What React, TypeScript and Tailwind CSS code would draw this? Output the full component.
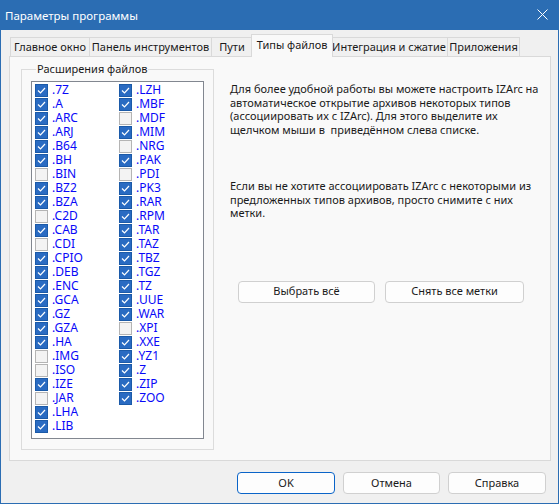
import React from 'react';

const col1: [string, boolean][] = [
  ['.7Z', true], ['.A', true], ['.ARC', true], ['.ARJ', true], ['.B64', true], ['.BH', true],
  ['.BIN', false], ['.BZ2', true], ['.BZA', true], ['.C2D', false], ['.CAB', true], ['.CDI', false],
  ['.CPIO', true], ['.DEB', true], ['.ENC', true], ['.GCA', true], ['.GZ', true], ['.GZA', true],
  ['.HA', true], ['.IMG', false], ['.ISO', false], ['.IZE', true], ['.JAR', false], ['.LHA', true],
  ['.LIB', true],
];

const col2: [string, boolean][] = [
  ['.LZH', true], ['.MBF', true], ['.MDF', false], ['.MIM', true], ['.NRG', false], ['.PAK', true],
  ['.PDI', false], ['.PK3', true], ['.RAR', true], ['.RPM', true], ['.TAR', true], ['.TAZ', true],
  ['.TBZ', true], ['.TGZ', true], ['.TZ', true], ['.UUE', true], ['.WAR', true], ['.XPI', false],
  ['.XXE', true], ['.YZ1', true], ['.Z', true], ['.ZIP', true], ['.ZOO', true],
];

const tabs = [
  { label: 'Главное окно', w: 'w-[80px]' },
  { label: 'Панель инструментов', w: 'w-[123px]' },
  { label: 'Пути', w: 'w-[42px]' },
  { label: 'Типы файлов', w: 'w-[82px]', active: true },
  { label: 'Интеграция и сжатие', w: 'w-[118px]' },
  { label: 'Приложения', w: 'w-[73px]' },
];

function Check({ checked }: { checked: boolean }) {
  if (!checked) {
    return <span className="w-[13px] h-[13px] shrink-0 border border-[#b4b4b4] bg-[#f3f3f3]" />;
  }
  return (
    <span className="w-[13px] h-[13px] shrink-0 border border-[#1b5aa8] bg-[#2a6bc2] flex items-center justify-center">
      <svg width="11" height="11" viewBox="0 0 11 11">
        <polyline points="2,5.5 4.5,8 9,3" fill="none" stroke="#ffffff" strokeWidth="1.2" />
      </svg>
    </span>
  );
}

function ExtColumn({ items }: { items: [string, boolean][] }) {
  return (
    <div className="flex flex-col w-[84px]">
      {items.map(([name, on]) => (
        <div key={name} className="h-[14px] flex items-center gap-[4px]">
          <Check checked={on} />
          <span className="text-[#0808f8] text-[12px] leading-[12px]">{name}</span>
        </div>
      ))}
    </div>
  );
}

function Btn({ children, w, primary }: { children: React.ReactNode; w: string; primary?: boolean }) {
  return (
    <button
      className={
        'h-[22px] rounded-[4px] bg-[#fdfdfd] text-[#1a1a1a] text-[11px] whitespace-nowrap ' +
        w +
        (primary ? ' border border-[#0a64c8]' : ' border border-[#d0d0d0]')
      }
    >
      {children}
    </button>
  );
}

export default function App() {
  return (
    <div
      className="w-[559px] h-[504px] border border-[#2b6db3] bg-[#f0f0f0] flex flex-col text-[11px] text-[#1a1a1a]"
      style={{ fontFamily: '"Noto Sans", "Liberation Sans", sans-serif' }}
    >
      {/* Title bar */}
      <div className="h-[29px] bg-[#2b6db3] flex items-center justify-between pl-[4px] pr-[10px] text-white">
        <span className="text-[11.5px]">Параметры программы</span>
        <svg width="11" height="11" viewBox="0 0 11 11" className="mb-[2px]">
          <path d="M0.5 0.5 L10.5 10.5 M10.5 0.5 L0.5 10.5" stroke="#ffffff" strokeWidth="1" />
        </svg>
      </div>

      {/* Body */}
      <div className="flex-1 flex flex-col pt-[4px] pl-[8px] pr-[7px]">
        {/* Tabs */}
        <div className="flex items-end h-[22px] pl-[1px]">
          {tabs.map((t) =>
            t.active ? (
              <div
                key={t.label}
                className={
                  t.w +
                  ' relative z-10 h-[23px] -mb-px -mx-[2px] bg-[#f9f9f9] border border-b-0 border-[#d9d9d9] flex items-center justify-center pb-[2px] whitespace-nowrap'
                }
              >
                {t.label}
              </div>
            ) : (
              <div
                key={t.label}
                className={
                  t.w +
                  ' h-[19px] bg-[#f0f0f0] border border-b-0 border-[#d9d9d9] -ml-px first:ml-0 flex items-center justify-center whitespace-nowrap'
                }
              >
                {t.label}
              </div>
            )
          )}
        </div>

        {/* Panel */}
        <div className="h-[405px] w-[542px] border border-[#d9d9d9] bg-[#f9f9f9] flex pl-[11px] pr-[14px]">
          <fieldset className="w-[193px] h-[388px] mt-[5px] border border-[#dcdcdc] px-[9px] pb-[9px]">
            <legend className="ml-[5px] px-[1px] leading-[14px]">Расширения файлов</legend>
            <div className="mt-[5px] h-[358px] bg-white border border-[#828790] flex pl-[3px] pt-[1px]">
              <ExtColumn items={col1} />
              <ExtColumn items={col2} />
            </div>
          </fieldset>

          <div className="flex-1 flex flex-col pl-[16px] pt-[25px] whitespace-nowrap">
            <p className="leading-[13.5px]">
              Для более удобной работы вы можете настроить IZArc на
              <br />
              автоматическое открытие архивов некоторых типов
              <br />
              (ассоциировать их с IZArc). Для этого выделите их
              <br />
              щелчком мыши в&nbsp; приведённом слева списке.
            </p>
            <p className="leading-[13.5px] mt-[43px]">
              Если вы не хотите ассоциировать IZArc с некоторыми из
              <br />
              предложенных типов архивов, просто снимите с них
              <br />
              метки.
            </p>
            <div className="flex gap-[10px] mt-[61px] pl-[8px]">
              <Btn w="w-[137px]">Выбрать всё</Btn>
              <Btn w="w-[139px]">Снять все метки</Btn>
            </div>
          </div>
        </div>

        {/* Dialog buttons */}
        <div className="flex justify-end gap-[8px] mt-[11px] pr-[5px]">
          <Btn w="w-[98px]" primary>
            OK
          </Btn>
          <Btn w="w-[97px]">Отмена</Btn>
          <Btn w="w-[98px]">Справка</Btn>
        </div>
      </div>
    </div>
  );
}
